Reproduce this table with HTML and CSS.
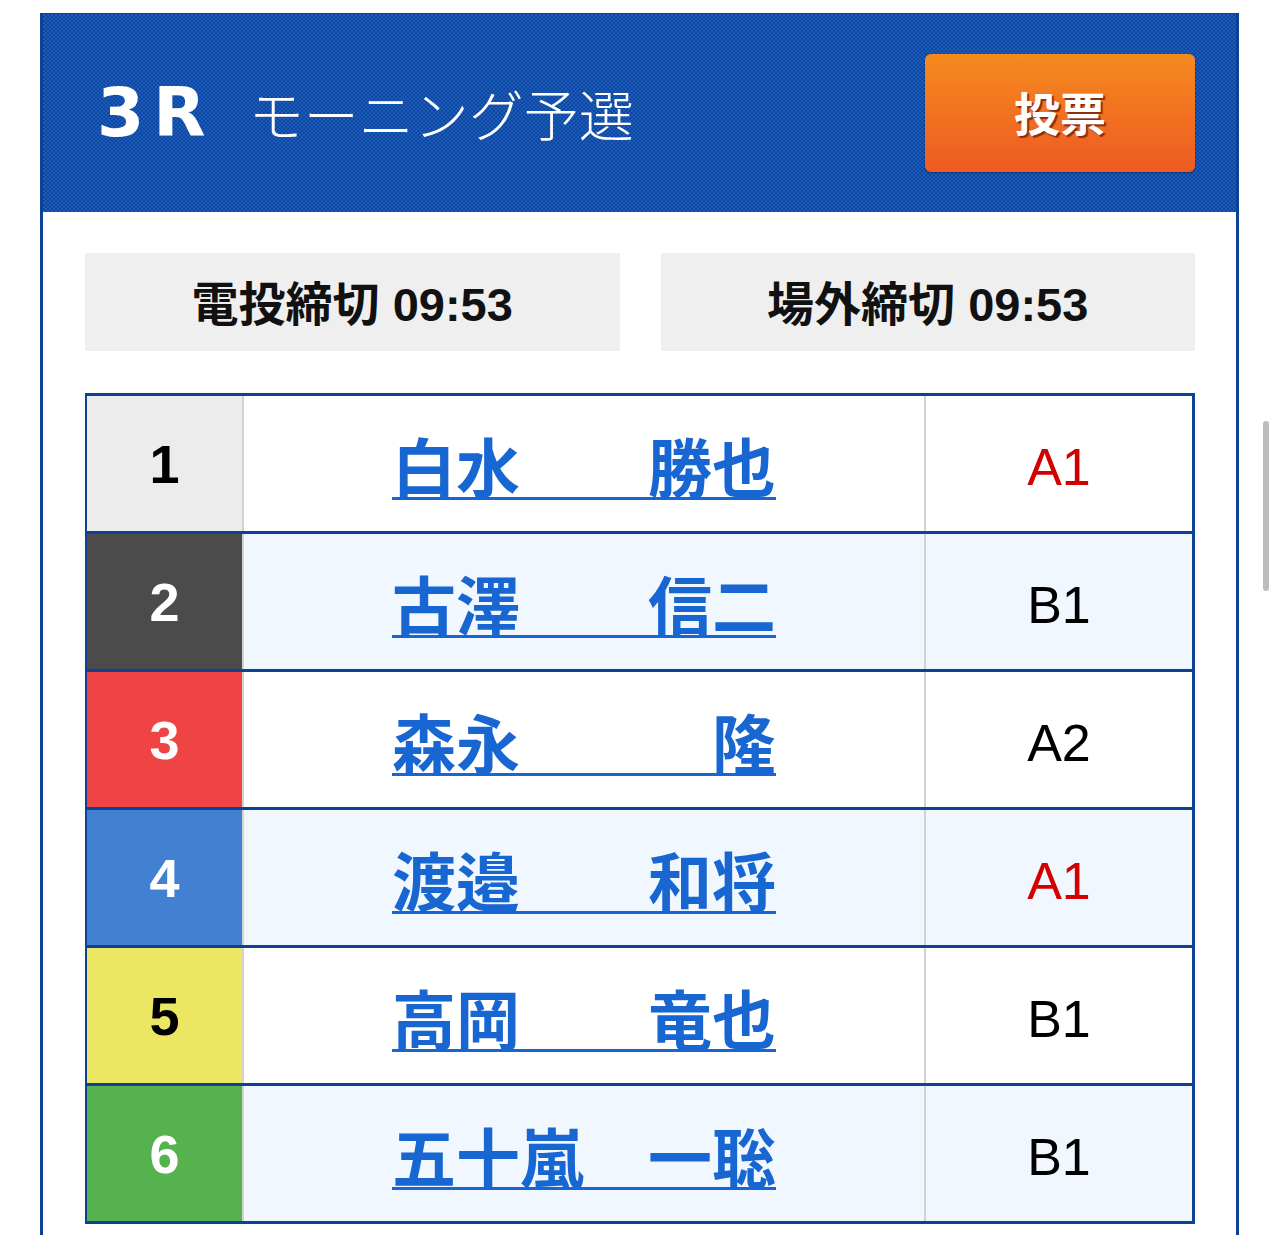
FILE: index.html
```html
<!DOCTYPE html>
<html lang="ja">
<head>
<meta charset="utf-8">
<title>3R モーニング予選</title>
<link rel="stylesheet" href="styles.css">
</head>
<body>
<div class="page">
  <section class="card">
    <header class="race-head">
      <h1 class="race-title"><span class="race-no">3R</span><span class="race-name">モーニング予選</span></h1>
      <a class="vote-btn" href="#">投票</a>
    </header>
    <div class="card-body">
      <div class="deadlines">
        <div class="deadline">電投締切 09:53</div>
        <div class="deadline">場外締切 09:53</div>
      </div>
      <div class="entries">
        <div class="entry">
          <div class="waku waku-1">1</div>
          <div class="racer"><a href="#">白水　　勝也</a></div>
          <div class="grade grade-a1">A1</div>
        </div>
        <div class="entry alt">
          <div class="waku waku-2">2</div>
          <div class="racer"><a href="#">古澤　　信二</a></div>
          <div class="grade">B1</div>
        </div>
        <div class="entry">
          <div class="waku waku-3">3</div>
          <div class="racer"><a href="#">森永　　　隆</a></div>
          <div class="grade">A2</div>
        </div>
        <div class="entry alt">
          <div class="waku waku-4">4</div>
          <div class="racer"><a href="#">渡邉　　和将</a></div>
          <div class="grade grade-a1">A1</div>
        </div>
        <div class="entry">
          <div class="waku waku-5">5</div>
          <div class="racer"><a href="#">高岡　　竜也</a></div>
          <div class="grade">B1</div>
        </div>
        <div class="entry alt">
          <div class="waku waku-6">6</div>
          <div class="racer"><a href="#">五十嵐　一聡</a></div>
          <div class="grade">B1</div>
        </div>
      </div>
    </div>
  </section>
</div>
<div class="scroll-thumb"></div>
</body>
</html>
```

FILE: styles.css
```css
html, body {
  margin: 0;
  padding: 0;
  background: #fff;
}
body {
  font-family: "Noto Sans CJK JP", "Liberation Sans", sans-serif;
  color: #111;
  overflow: hidden;
}
.page {
  padding: 13px 41px 0 40px;
}
.card {
  border-left: 3px solid #0e4096;
  border-right: 3px solid #0e4096;
  border-top: 1px solid #0e4096;
  min-height: 1230px;
  box-sizing: border-box;
}
.race-head {
  height: 198px;
  box-sizing: border-box;
  display: flex;
  align-items: center;
  justify-content: space-between;
  padding: 0 41px 0 54px;
  background-color: #1450ab;
  background-image: repeating-conic-gradient(#0e46a2 0 25%, #1c5cb9 0 50%);
  background-size: 4px 4px;
}
.race-title {
  margin: 0;
  display: flex;
  align-items: center;
  color: #fff;
  font-weight: normal;
}
.race-no {
  font-family: "DejaVu Sans", "Liberation Sans", sans-serif;
  font-weight: bold;
  font-size: 68px;
  letter-spacing: 9px;
  line-height: 1;
  margin-right: 34px;
}
.race-name {
  font-family: "Noto Sans CJK JP", sans-serif;
  font-weight: 300;
  font-size: 55px;
  line-height: 1;
  margin-top: -2px;
}
.vote-btn {
  width: 270px;
  height: 118px;
  display: flex;
  align-items: center;
  justify-content: center;
  border-radius: 6px;
  background: linear-gradient(#f58a1e, #ee5a23);
  box-shadow: 0 1px 2px rgba(0, 0, 0, 0.35);
  color: #fff;
  text-decoration: none;
  font-size: 46px;
  font-weight: bold;
  text-shadow: 2px 2px 1px #8a2c10;
  padding-bottom: 4px;
  box-sizing: border-box;
}
.card-body {
  padding: 41px 41px 0 42px;
}
.deadlines {
  display: grid;
  grid-template-columns: 1fr 1fr;
  gap: 41px;
}
.deadline {
  height: 98px;
  display: flex;
  align-items: center;
  justify-content: center;
  background: #efefef;
  font-size: 47px;
  font-weight: bold;
  color: #111;
  font-family: "Liberation Sans", "Noto Sans CJK JP", sans-serif;
  padding-bottom: 4px;
  box-sizing: border-box;
}
.entries {
  margin-top: 42px;
  border-left: 2px solid #0e4096;
  border-right: 3px solid #0e4096;
  border-bottom: 3px solid #0e4096;
}
.entry {
  display: grid;
  grid-template-columns: 157px 1fr 266px;
  height: 135px;
  border-top: 3px solid #0e4096;
  background: #fff;
}
.entry.alt {
  background: #f1f7fe;
}
.waku {
  display: flex;
  align-items: center;
  justify-content: center;
  font-family: "Liberation Sans", sans-serif;
  font-weight: bold;
  font-size: 54px;
  color: #fff;
  border-right: 2px solid #d2d2d2;
}
.waku-1 { background: #ececec; color: #000; }
.waku-2 { background: #4b4b4b; }
.waku-3 { background: #f04343; }
.waku-4 { background: #4281d2; }
.waku-5 { background: #ebe763; color: #000; }
.waku-6 { background: #55b24e; }
.racer {
  display: flex;
  align-items: center;
  justify-content: center;
  border-right: 2px solid #d2d2d2;
}
.racer a {
  color: #1766d2;
  font-size: 64px;
  font-weight: bold;
  line-height: 1;
  text-decoration: underline;
  text-decoration-thickness: 3px;
  text-underline-offset: 5px;
  white-space: pre;
}
.grade {
  display: flex;
  align-items: center;
  justify-content: center;
  font-family: "Liberation Sans", sans-serif;
  font-size: 52px;
  color: #000;
  padding-top: 6px;
}
.grade-a1 {
  color: #d30000;
}
.scroll-thumb {
  position: fixed;
  left: 1263px;
  top: 421px;
  width: 6px;
  height: 170px;
  border-radius: 3px;
  background: #bcbcbc;
}
```
